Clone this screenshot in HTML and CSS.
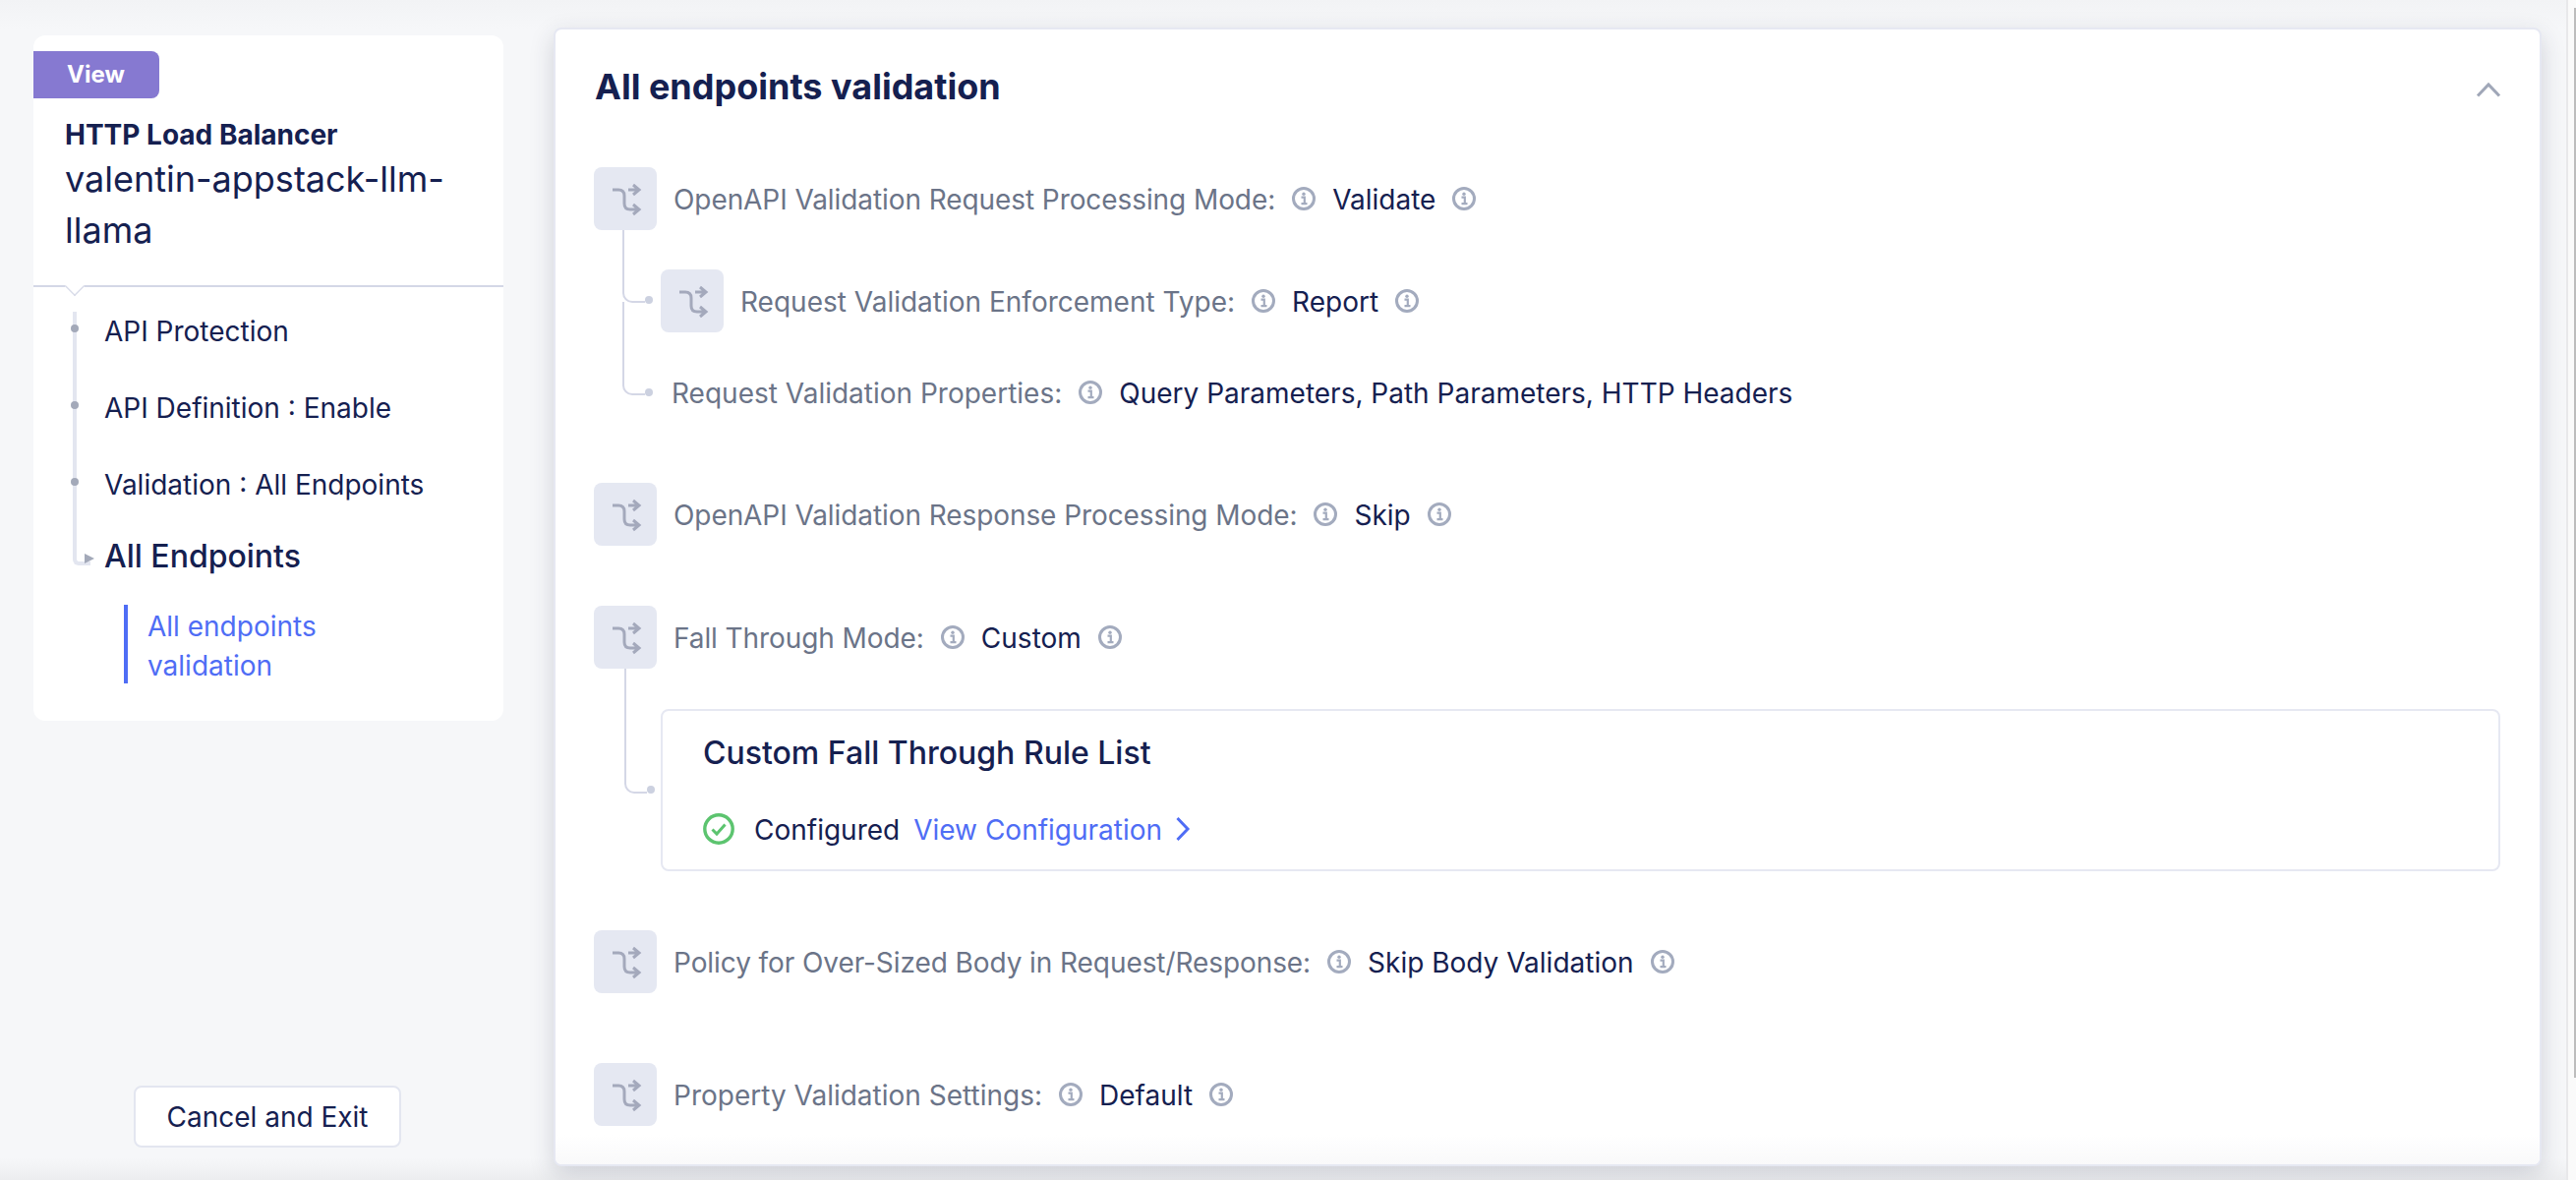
FILE: index.html
```html
<!DOCTYPE html>
<html lang="en">
<head>
<meta charset="utf-8">
<title>All endpoints validation</title>
<link rel="stylesheet" href="styles.css">
</head>
<body>
<svg class="defs" width="0" height="0" aria-hidden="true">
  <symbol id="route" viewBox="0 0 64 64">
    <path d="M19 23H25C29 23 31 25 31 29V37C31 41 33 43 37 43H45M35 23H45M40 18L46 23L40 28M40 38L46 43L40 48" fill="none" stroke="currentColor" stroke-width="3"/>
  </symbol>
  <symbol id="info" viewBox="0 0 24 24">
    <circle cx="12" cy="12" r="10.5" fill="none" stroke="currentColor" stroke-width="3"/>
    <circle cx="12" cy="7.2" r="1.7" fill="currentColor"/>
    <path d="M9.5 10.6H12.8V16.6M9.5 17.2H15.5" fill="none" stroke="currentColor" stroke-width="2.2"/>
  </symbol>
</svg>
<div class="page">
  <aside class="sidebar">
    <div class="side-card">
      <header class="side-head">
        <span class="badge">View</span>
        <div class="type">HTTP Load Balancer</div>
        <div class="name">valentin-appstack-llm-llama</div>
        <span class="notch"></span>
      </header>
      <nav class="tree">
        <div class="tree-item">API Protection</div>
        <div class="tree-item">API Definition : Enable</div>
        <div class="tree-item">Validation : All Endpoints</div>
        <div class="tree-current">All Endpoints</div>
        <div class="tree-link">All endpoints validation</div>
      </nav>
    </div>
    <button class="cancel" type="button">Cancel and Exit</button>
  </aside>
  <main class="panel">
    <header class="panel-head">
      <h1>All endpoints validation</h1>
      <svg class="collapse" width="26" height="16" viewBox="0 0 26 16"><path d="M2 14.5L13 3L24 14.5" fill="none" stroke="currentColor" stroke-width="3"/></svg>
    </header>
    <div class="fields">
      <section class="field-group first">
        <div class="row">
          <span class="tile"><svg width="64" height="64"><use href="#route"/></svg></span>
          <span class="label tight">OpenAPI Validation Request Processing Mode:</span>
          <svg class="info" width="24" height="24"><use href="#info"/></svg>
          <span class="value">Validate</span>
          <svg class="info" width="24" height="24"><use href="#info"/></svg>
        </div>
        <div class="row child child-a">
          <span class="tile"><svg width="64" height="64"><use href="#route"/></svg></span>
          <span class="label">Request Validation Enforcement Type:</span>
          <svg class="info" width="24" height="24"><use href="#info"/></svg>
          <span class="value">Report</span>
          <svg class="info" width="24" height="24"><use href="#info"/></svg>
        </div>
        <div class="row child child-b">
          <span class="label">Request Validation Properties:</span>
          <svg class="info" width="24" height="24"><use href="#info"/></svg>
          <span class="value">Query Parameters, Path Parameters, HTTP Headers</span>
        </div>
      </section>
      <section class="field-group response">
        <div class="row">
          <span class="tile"><svg width="64" height="64"><use href="#route"/></svg></span>
          <span class="label tight">OpenAPI Validation Response Processing Mode:</span>
          <svg class="info" width="24" height="24"><use href="#info"/></svg>
          <span class="value">Skip</span>
          <svg class="info" width="24" height="24"><use href="#info"/></svg>
        </div>
      </section>
      <section class="field-group fall">
        <div class="row">
          <span class="tile"><svg width="64" height="64"><use href="#route"/></svg></span>
          <span class="label tight">Fall Through Mode:</span>
          <svg class="info" width="24" height="24"><use href="#info"/></svg>
          <span class="value">Custom</span>
          <svg class="info" width="24" height="24"><use href="#info"/></svg>
        </div>
        <div class="subcard">
          <h2>Custom Fall Through Rule List</h2>
          <div class="status">
            <svg class="check" width="32" height="32" viewBox="0 0 32 32"><circle cx="16" cy="16" r="14.2" fill="none" stroke="currentColor" stroke-width="3.4"/><path d="M9.5 16.5L14 21L22.5 11.5" fill="none" stroke="currentColor" stroke-width="3"/></svg>
            <span class="value">Configured</span>
            <a class="link" href="#">View Configuration</a>
            <svg class="link-arrow" width="16" height="26" viewBox="0 0 16 26"><path d="M2.5 2L13 13L2.5 24" fill="none" stroke="currentColor" stroke-width="3"/></svg>
          </div>
        </div>
      </section>
      <section class="field-group oversize">
        <div class="row">
          <span class="tile"><svg width="64" height="64"><use href="#route"/></svg></span>
          <span class="label tight">Policy for Over-Sized Body in Request/Response:</span>
          <svg class="info" width="24" height="24"><use href="#info"/></svg>
          <span class="value">Skip Body Validation</span>
          <svg class="info" width="24" height="24"><use href="#info"/></svg>
        </div>
      </section>
      <section class="field-group property">
        <div class="row">
          <span class="tile"><svg width="64" height="64"><use href="#route"/></svg></span>
          <span class="label">Property Validation Settings:</span>
          <svg class="info" width="24" height="24"><use href="#info"/></svg>
          <span class="value">Default</span>
          <svg class="info" width="24" height="24"><use href="#info"/></svg>
        </div>
      </section>
    </div>
  </main>
  <div class="scroll-track"><span class="scroll-thumb"></span></div>
</div>
</body>
</html>
```
FILE: styles.css
```css
* { box-sizing: border-box; }
html, body { margin: 0; height: 100%; overflow: hidden; }
body {
  font-family: Inter, "Liberation Sans", sans-serif;
  color: #152050;
  background: #f6f7f9;
}
.defs { position: absolute; }
.page {
  display: flex;
  height: 1200px;
  background:
    linear-gradient(to top, #ecedef 0, rgba(236, 237, 239, 0) 22px),
    linear-gradient(#f2f3f5 0, #f6f7f9 30px);
}
.sidebar {
  width: 563px;
  flex: none;
  padding: 36px 0 33px 34px;
  display: flex;
  flex-direction: column;
  align-items: flex-start;
}
.side-card {
  width: 478px;
  height: 697px;
  background: #fff;
  border-radius: 12px;
}
.side-head {
  position: relative;
  height: 256px;
  padding-top: 16px;
  border-bottom: 2px solid #d4d7e6;
}
.badge {
  display: block;
  width: 128px;
  height: 48px;
  padding-left: 34px;
  background: #8679d1;
  color: #fff;
  font-size: 24px;
  font-weight: 700;
  line-height: 48px;
  border-radius: 0 8px 8px 0;
}
.type {
  margin: 19px 32px 0;
  font-size: 28px;
  font-weight: 700;
  line-height: 36px;
}
.name {
  margin: 1px 32px 0;
  font-size: 36px;
  line-height: 52px;
  width: 400px;
}
.notch {
  position: absolute;
  left: 32px;
  bottom: -11px;
  width: 20px;
  height: 20px;
  background: #fff;
  border-right: 2px solid #d9dce9;
  border-bottom: 2px solid #d9dce9;
  transform: rotate(45deg) scale(.72);
}
.tree {
  display: flex;
  flex-direction: column;
  padding: 25px 0 0 72px;
  font-size: 28px;
}
.tree-item {
  position: relative;
  height: 78px;
  line-height: 40px;
}
.tree-item::before {
  content: "";
  position: absolute;
  left: -32px;
  top: 0;
  bottom: 0;
  width: 4px;
  background: #e3e6f0;
}
.tree-item::after {
  content: "";
  position: absolute;
  left: -34px;
  top: 13px;
  width: 8px;
  height: 8px;
  border-radius: 50%;
  background: #a3a9b9;
}
.tree-current {
  position: relative;
  height: 71px;
  font-size: 32px;
  font-weight: 500;
  line-height: 44px;
  margin-top: -7px;
}
.tree-current::before {
  content: "";
  position: absolute;
  left: -32px;
  top: -12px;
  width: 14px;
  height: 39px;
  border-left: 4px solid #e3e6f0;
  border-bottom: 4px solid #e3e6f0;
  border-bottom-left-radius: 6px;
}
.tree-current::after {
  content: "";
  position: absolute;
  left: -20px;
  top: 19px;
  border-left: 10px solid #a3a9b9;
  border-top: 5.5px solid transparent;
  border-bottom: 5.5px solid transparent;
}
.tree-link {
  margin-left: 20px;
  width: 210px;
  height: 80px;
  padding: 2px 0 0 20px;
  border-left: 4px solid #4f6df5;
  color: #4f6df5;
  line-height: 40px;
}
.cancel {
  margin: auto 0 0 102px;
  width: 272px;
  height: 63px;
  background: #fff;
  border: 2px solid #e3e6f0;
  border-radius: 8px;
  color: #152050;
  font: 400 28px Inter, "Liberation Sans", sans-serif;
  padding: 0;
}
.panel {
  position: relative;
  flex: none;
  align-self: flex-start;
  width: 2022px;
  height: 1158px;
  margin-top: 28px;
  background: #fff;
  border: 2px solid #e6e8f2;
  border-radius: 8px;
  box-shadow: 0 8px 24px rgba(40, 44, 70, .18);
  overflow: hidden;
}
.panel::after {
  content: "";
  position: absolute;
  left: 0;
  right: 0;
  bottom: 0;
  height: 30px;
  background: linear-gradient(rgba(248, 248, 250, 0), #f9f9fa);
}
.panel-head {
  display: flex;
  align-items: center;
  justify-content: space-between;
  height: 68px;
  margin-top: 24px;
  padding: 0 39px 0 40px;
}
h1 {
  margin: 0;
  font-size: 36px;
  font-weight: 700;
  line-height: 68px;
}
.collapse { color: #a0a7b8; margin-top: 6px; }
.fields {
  padding: 48px 40px 0 39px;
  font-size: 28px;
}
.row {
  display: flex;
  align-items: center;
  min-height: 40px;
}
.tile {
  flex: none;
  width: 64px;
  height: 64px;
  margin-right: 17px;
  border-radius: 8px;
  background: #e5e8f2;
  color: #a4a9bc;
}
.tile svg { display: block; }
.label { color: #6b7488; padding-top: 2px; }
.label.tight { letter-spacing: -.08px; }
.value { color: #152050; padding-top: 2px; }
.info { flex: none; margin: 0 17px; color: #a3abbe; }
.row > .info:last-child { margin-right: 0; margin-left: 17px; }
.field-group { position: relative; }
.child { position: relative; }
.child-a { margin: 40px 0 0 68px; }
.child-b { margin: 41px 0 0 79px; }
.child::before {
  content: "";
  position: absolute;
  left: -39px;
  width: 21px;
  border-left: 2px solid #d4d7e6;
  border-bottom: 2px solid #d4d7e6;
  border-bottom-left-radius: 10px;
}
.child-a::before { top: -40px; height: 72px; }
.child-b::before { left: -50px; top: -72px; height: 93px; }
.child::after, .subcard::after {
  content: "";
  position: absolute;
  width: 8px;
  height: 8px;
  border-radius: 50%;
  background: #ccd1e0;
}
.child-a::after { left: -16px; top: 27px; }
.child-b::after { left: -27px; top: 16px; }
.response { margin-top: 72px; }
.fall { margin-top: 61px; }
.subcard {
  position: relative;
  height: 165px;
  width: 1871px;
  margin: 41px 0 0 68px;
  padding: 21px 0 0 41px;
  border: 2px solid #e6e8f2;
  border-radius: 8px;
}
.subcard::before {
  content: "";
  position: absolute;
  left: -39px;
  top: -43px;
  width: 21px;
  height: 125px;
  border-left: 2px solid #d4d7e6;
  border-bottom: 2px solid #d4d7e6;
  border-bottom-left-radius: 10px;
}
.subcard::after { left: -16px; top: 76px; }
h2 {
  margin: 0;
  font-size: 32px;
  font-weight: 500;
  line-height: 44px;
}
.status {
  display: flex;
  align-items: center;
  margin-top: 35px;
  height: 40px;
}
.check { color: #5cc46f; margin-right: 20px; }
.link { color: #4f6df5; text-decoration: none; margin-left: 14px; padding-top: 2px; }
.link-arrow { color: #4f6df5; margin-left: 13px; }
.oversize { margin-top: 60px; }
.property { margin-top: 71px; }
.scroll-track {
  flex: none;
  width: 10px;
  height: 1200px;
  margin-left: 25px;
  background: #fafafa;
  border-left: 2px solid #e8e8ea;
  display: flex;
  justify-content: flex-end;
}
.scroll-thumb {
  width: 2px;
  height: 1088px;
  margin-top: 8px;
  background: #bdbdbd;
}
```
